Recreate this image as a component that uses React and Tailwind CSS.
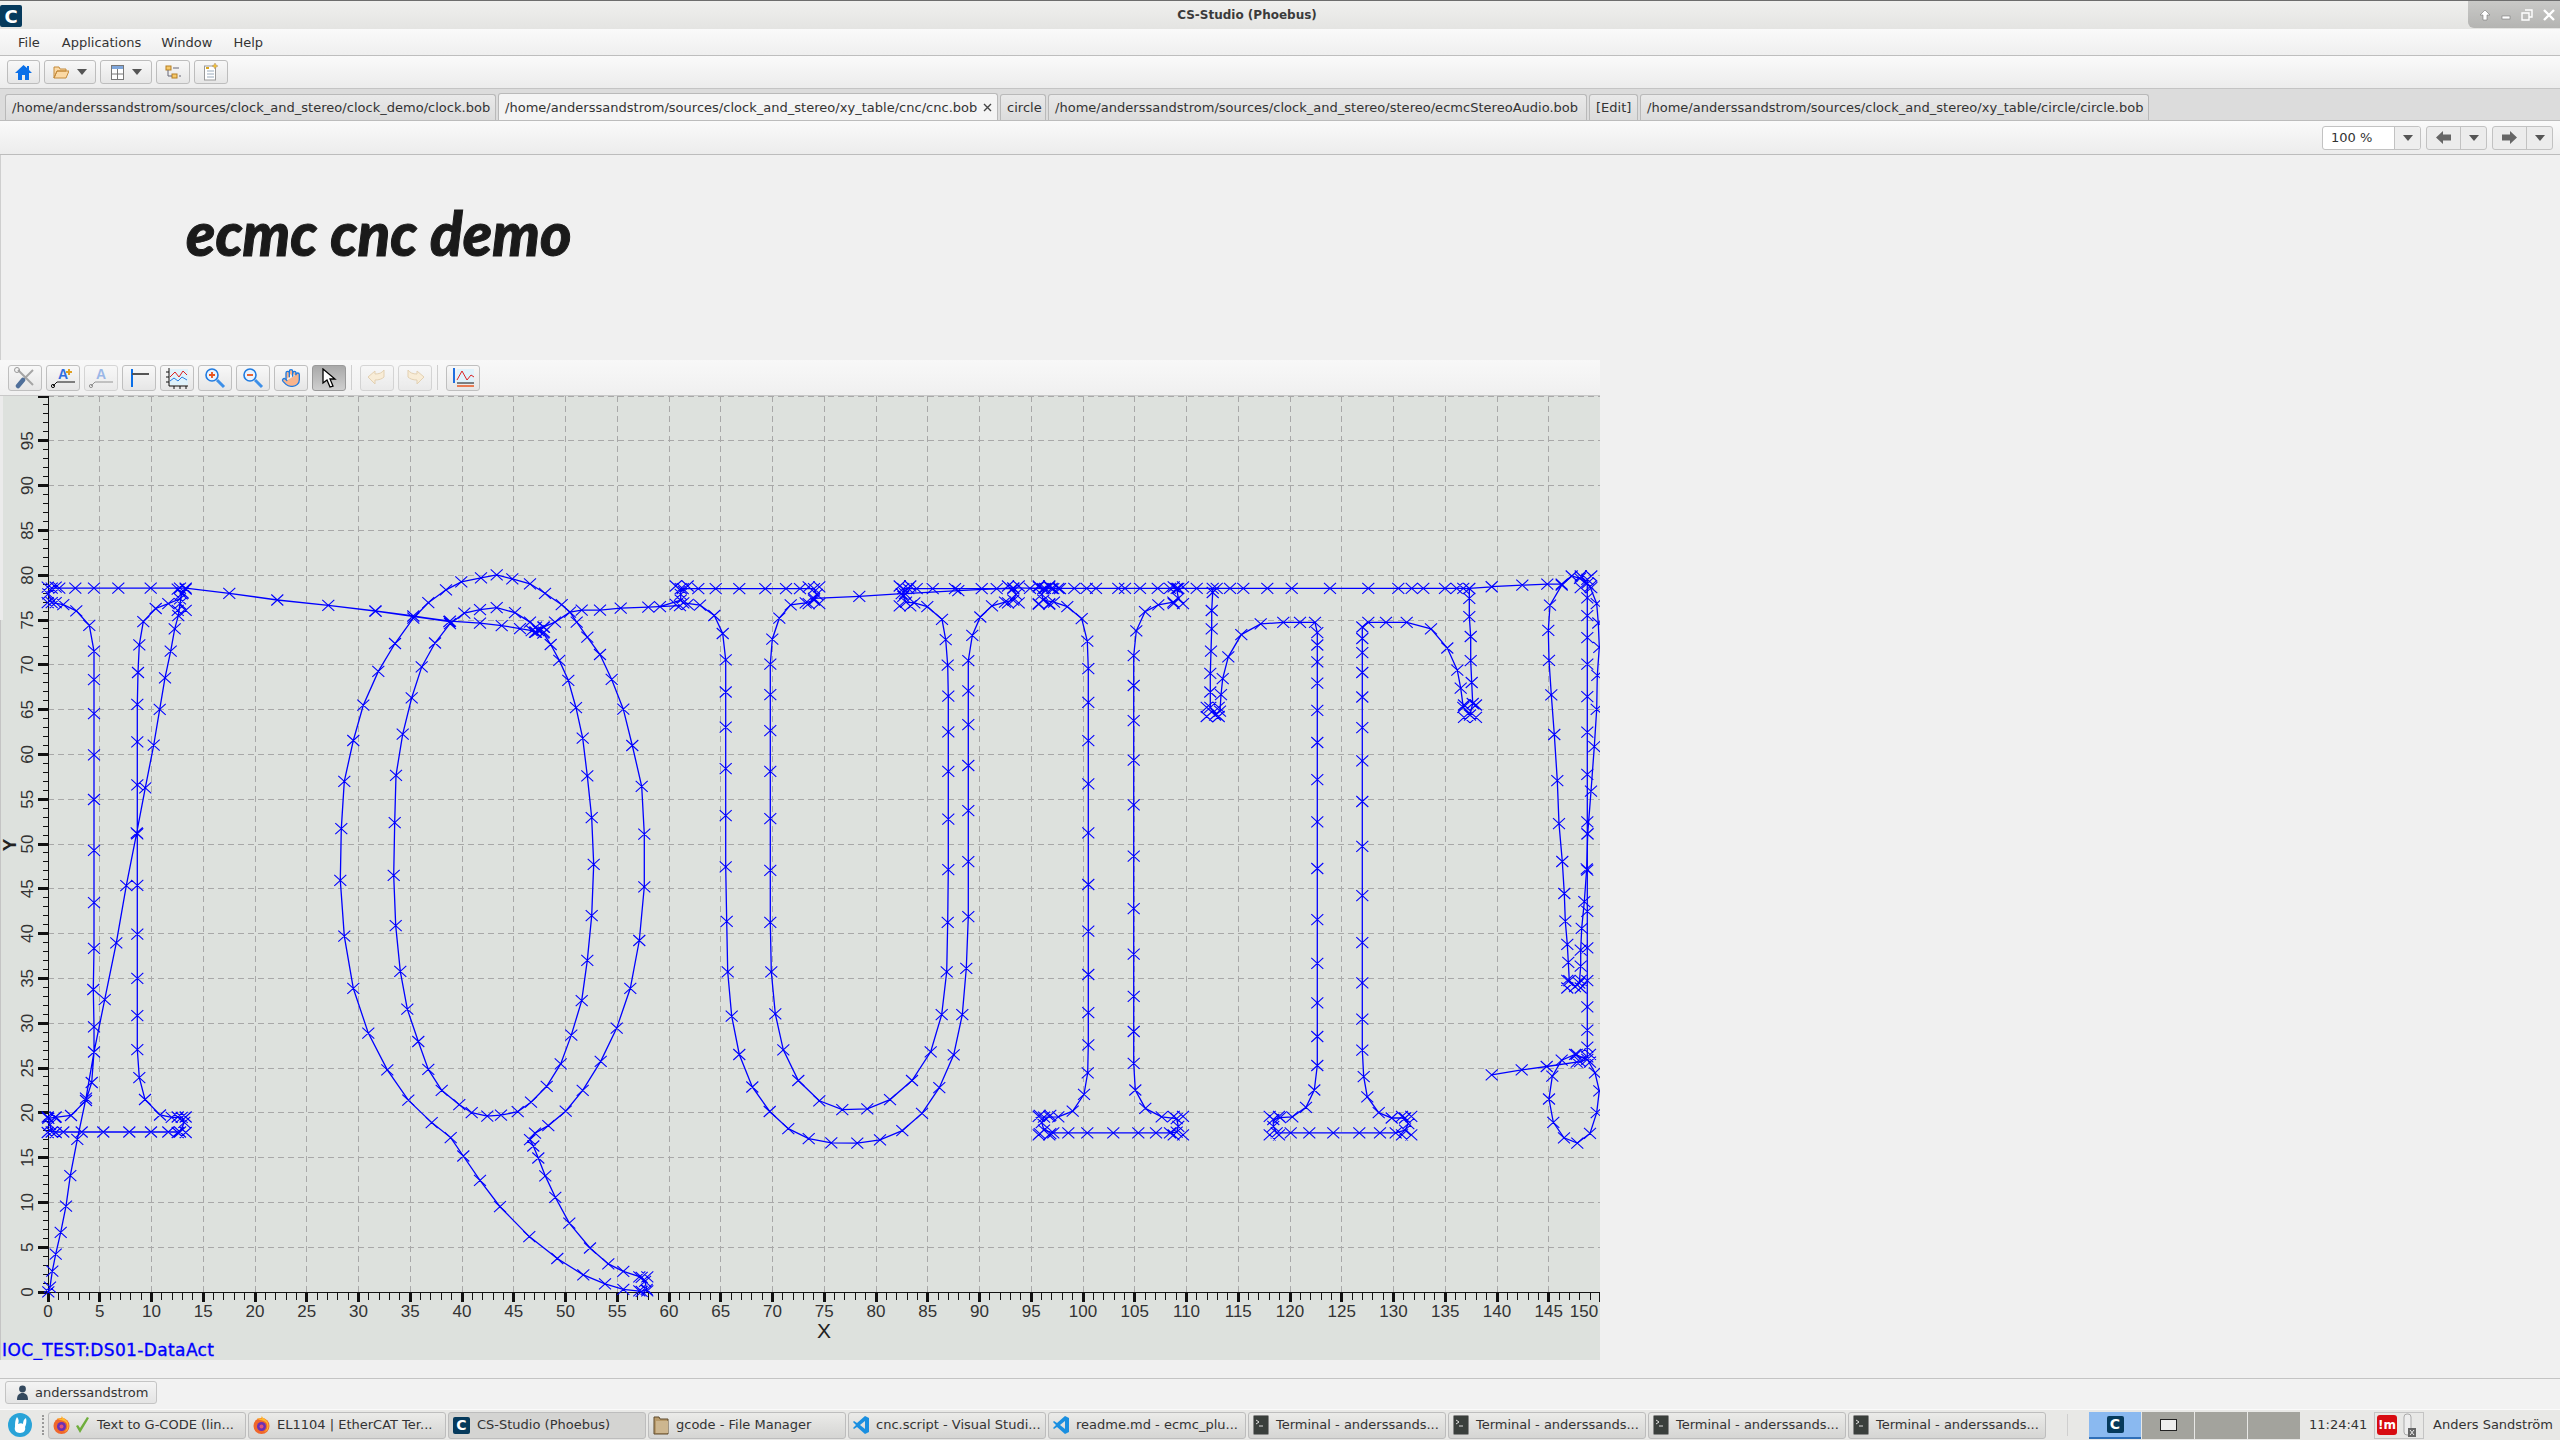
import React from 'react';
import { Hand } from 'lucide-react';

// chart geometry, in page pixels
const X0 = 48;
const Y0 = 1292;
const UX = 10.35;
const UY = 8.96;
const px = (v) => X0 + v * UX;
const py = (v) => Y0 - v * UY;

// traces were read off crops of the plot, so each crop gets its own scale
const z3 = (a) => a.map(([x, y]) => [x / 3, 340 + y / 3]);
const z7 = (a) => a.map(([x, y]) => [x / 3, 560 + y / 2.063]);
const z8 = (a) => a.map(([x, y]) => [300 + x / 3, 550 + y / 2.01]);
const z9 = (a) => a.map(([x, y]) => [1480 + x / 3, 560 + y / 2.063]);
const z10 = (a) => a.map(([x, y]) => [660 + x / 3, 560 + y / 2.613]);
const z11 = (a) => a.map(([x, y]) => [1030 + x / 3, 560 + y / 2.613]);

const traces = [
  // first I
  z7([[145,1510],[150,1500],[157,1467],[167,1432],[182,1387],[198,1333],[211,1270],[232,1195],[258,1110],[282,1015],[314,907],[349,790],[379,672],[410,563],[436,470],[461,382],[479,308],[495,243],[512,188],[524,142],[535,115],[540,90],[545,70],[557,58],[540,58],[452,58],[355,58],[282,58],[226,58],[178,58],[155,58],[145,70],[155,88],[190,92],[229,105],[268,135],[282,188],[282,247],[282,317],[282,402],[282,494],[282,599],[282,707],[282,801],[280,886],[282,963],[282,1015],[275,1078],[258,1115],[213,1146],[165,1150],[145,1152],[150,1165],[155,1180],[190,1180],[245,1180],[310,1180],[388,1180],[453,1180],[505,1180],[540,1180],[553,1160],[545,1150],[515,1150],[480,1145],[435,1113],[418,1068],[412,1010],[412,940],[412,863],[412,772],[412,671],[412,565],[412,464],[412,375],[412,298],[414,232],[418,175],[430,127],[467,100],[505,90],[540,80],[548,68],[557,58]]),
  // travel over to the Q
  [...z7([[557,58]]), ...z3([[688,760],[832,780],[985,796],[1126,813],[1240,828],[1348,845]]), ...z8([[227,123],[340,133],[450,143],[540,147],[605,152],[660,158],[695,162],[705,165],[715,162],[730,155],[765,145],[810,125],[845,121],[900,121],[962,117],[1045,115],[1140,112]])],
  // Q inner
  z8([[715,162],[690,145],[645,126],[590,116],[540,120],[493,127],[450,148],[405,187],[365,235],[335,297],[308,370],[288,453],[284,548],[281,654],[287,755],[301,847],[322,923],[355,988],[385,1044],[425,1086],[478,1115],[515,1131],[562,1138],[603,1136],[653,1129],[693,1110],[740,1078],[782,1033],[814,975],[845,906],[862,825],[875,735],[881,632],[875,538],[862,454],[848,378],[828,317],[805,262],[778,222],[752,190],[730,167],[715,162]]),
  // Q outer and tail
  z8([[810,125],[785,110],[735,87],[690,68],[637,58],[590,50],[543,56],[484,64],[438,80],[385,106],[340,137],[285,188],[235,244],[190,312],[160,383],[133,465],[124,560],[121,664],[133,776],[160,881],[205,971],[262,1045],[325,1106],[395,1151],[452,1181],[490,1218],[540,1267],[600,1320],[688,1380],[772,1424],[850,1457],[915,1475],[970,1486],[1025,1490],[1040,1486],[1035,1470],[1025,1462],[970,1450],[925,1435],[870,1403],[808,1353],[766,1301],[736,1258],[715,1222],[700,1198],[690,1185],[705,1172],[745,1157],[797,1128],[848,1086],[902,1028],[950,961],[991,881],[1018,785],[1033,677],[1033,571],[1025,475],[997,393],[970,320],[935,260],[900,210],[862,175],[830,145],[810,125]]),
  // U
  z10([[0,122],[62,105],[62,90],[62,75],[68,75],[115,75],[167,75],[238,75],[316,75],[378,75],[420,75],[462,75],[470,90],[462,105],[437,112],[392,117],[358,152],[337,207],[331,272],[331,352],[331,446],[331,552],[331,676],[331,811],[331,947],[334,1076],[346,1186],[370,1280],[415,1360],[478,1413],[547,1436],[622,1434],[690,1410],[756,1360],[812,1285],[845,1188],[860,1076],[863,947],[865,809],[865,677],[865,552],[865,449],[865,356],[863,275],[857,208],[846,155],[802,122],[763,112],[738,110],[730,95],[730,75]]),
  z10([[62,105],[70,112],[120,118],[163,145],[188,192],[197,261],[197,345],[197,437],[197,545],[197,668],[197,802],[200,944],[203,1076],[215,1192],[238,1292],[277,1377],[329,1441],[385,1486],[446,1512],[514,1523],[592,1524],[660,1515],[727,1491],[786,1446],[838,1379],[881,1293],[907,1188],[919,1067],[925,932],[925,788],[925,655],[925,537],[925,430],[925,342],[925,263],[937,197],[961,149],[996,120],[1035,110],[1060,105],[1068,90],[1060,75],[1010,75],[965,75],[885,75],[818,75],[770,75],[745,75],[730,75]]),
  z10([[462,100],[598,95],[725,88]]),
  z10([[735,88],[895,80],[1060,73],[1150,75],[1180,75],[1200,75]]),
  // second I
  z11([[0,74],[45,74],[65,74],[85,74],[133,74],[170,74],[198,74],[265,74],[285,74],[330,74],[383,74],[420,74],[440,74],[445,100],[430,110],[385,117],[345,135],[319,185],[311,250],[311,328],[311,420],[311,523],[311,640],[311,774],[311,911],[311,1030],[311,1140],[311,1232],[311,1315],[316,1385],[346,1433],[395,1455],[440,1460],[445,1480],[440,1495],[420,1497],[378,1497],[325,1497],[250,1497],[172,1497],[115,1497],[70,1497],[42,1490],[35,1470],[42,1456],[85,1455],[128,1440],[162,1396],[173,1340],[175,1267],[175,1183],[175,1083],[175,970],[175,848],[175,713],[175,585],[175,472],[175,372],[175,284],[172,212],[155,153],[112,122],[72,110],[40,105],[35,90],[45,74]]),
  // T
  z11([[445,74],[500,74],[548,74],[548,85],[545,132],[545,180],[543,238],[541,296],[541,345],[541,385],[555,405],[570,395],[573,352],[578,310],[595,253],[634,195],[692,167],[760,163],[810,163],[855,163],[862,190],[862,222],[862,266],[862,322],[862,393],[862,477],[862,574],[862,684],[862,806],[862,940],[862,1054],[862,1157],[862,1245],[862,1321],[853,1385],[828,1430],[787,1455],[750,1457],[730,1462],[730,1480],[740,1497],[782,1497],[838,1497],[910,1497],[988,1497],[1050,1497],[1097,1497],[1125,1490],[1135,1473],[1125,1458],[1085,1458],[1046,1444],[1012,1403],[1001,1350],[997,1281],[997,1200],[997,1105],[997,1000],[997,877],[997,748],[997,631],[997,525],[997,438],[997,358],[997,294],[997,242],[997,205],[997,175],[1015,163],[1068,163],[1130,163],[1203,180],[1252,230],[1282,288],[1292,335],[1300,385],[1320,405],[1328,375],[1325,320],[1322,263],[1322,200],[1318,148],[1318,100],[1318,75],[1300,74],[1280,74],[1245,74],[1180,74],[1145,74],[1105,74],[1015,74],[900,74],[785,74],[712,74],[640,74],[600,74],[560,74],[548,74]]),
  [...z11([[1318,74],[1385,70]]), ...z9([[35,55],[127,52],[202,50],[245,50],[275,33]])],
  // exclamation mark
  z9([[245,52],[210,93],[205,145],[207,207],[214,278],[223,360],[232,455],[237,544],[247,622],[253,688],[256,745],[262,793],[265,830],[268,868],[285,880],[298,873],[302,838],[302,805],[305,760],[313,705],[320,637],[323,565],[333,477],[343,385],[350,308],[352,238],[358,180],[355,130],[350,90],[330,55],[300,38],[275,33],[245,52]]),
  z9([[322,40],[322,48],[322,78],[322,115],[322,160],[322,215],[322,282],[322,355],[322,442],[322,540],[322,565],[322,640],[322,725],[322,800],[322,868],[322,922],[322,970],[322,1005],[322,1025]]),
  z9([[322,1030],[345,1058],[358,1095],[350,1140],[330,1183],[292,1203],[252,1192],[220,1160],[207,1112],[217,1065],[245,1032],[285,1020],[322,1030],[300,1035],[200,1045],[125,1052],[35,1062]]),
];

// the serif corners are where the machine slows down: markers pile up there
const pile = ([x, y], w, h) => [[x - w, y - h], [x + w, y - h], [x - w, y + h], [x + w, y + h]];
const piles = [
  ...z7([...pile([155, 72], 12, 16), ...pile([545, 82], 12, 22), ...pile([155, 1165], 12, 16), ...pile([545, 1165], 12, 16)]),
  ...z8([...pile([720, 160], 12, 5), ...pile([1030, 1475], 12, 14)]),
  ...z10([...pile([65, 92], 18, 24), ...pile([462, 92], 16, 22), ...pile([735, 94], 16, 26), ...pile([1060, 90], 16, 22), ...pile([1152, 92], 16, 24), ...pile([1155, 1475], 16, 24)]),
  ...z11([...pile([42, 92], 16, 22), ...pile([445, 92], 14, 22), ...pile([42, 1478], 16, 24), ...pile([445, 1478], 14, 24), ...pile([733, 1478], 14, 24), ...pile([1130, 1478], 14, 24), ...pile([548, 397], 18, 12), ...pile([1320, 395], 18, 16)]),
  ...z9([...pile([318, 45], 16, 12), ...pile([282, 875], 20, 8), ...pile([310, 1028], 20, 8)]),
];

const lineD = (pts) => pts.map(([x, y], i) => `${i ? 'L' : 'M'}${x.toFixed(1)} ${y.toFixed(1)}`).join('');
const markD = [...traces.flat(), ...piles]
  .map(([x, y]) => `M${(x - 6).toFixed(1)} ${(y - 5.5).toFixed(1)}l12 11m0 -11l-12 11`)
  .join('');

const range = (n) => Array.from({ length: n }, (_, i) => i);

function Plot() {
  return (
    <svg viewBox="0 396 1600 964" width="1600" height="964" className="block shrink-0">
      <rect x="0" y="396" width="1600" height="964" fill="#dde1dd" />
      <rect x="0" y="396" width="3" height="224" fill="#ebebeb" />
      <rect x="0" y="620" width="1" height="740" fill="#c4c4c4" />
      <g stroke="#a8a8a8" strokeWidth="1" strokeDasharray="6 4" shapeRendering="crispEdges">
        {range(30).map((i) => (
          <line key={i} x1={px((i + 1) * 5)} x2={px((i + 1) * 5)} y1="396" y2={Y0} />
        ))}
        {range(20).map((i) => (
          <line key={i} x1={X0} x2="1600" y1={py((i + 1) * 5)} y2={py((i + 1) * 5)} />
        ))}
      </g>
      {/* axes */}
      <g stroke="#111" shapeRendering="crispEdges">
        <line x1={X0} x2={X0} y1="396" y2={Y0} />
        <line x1={X0} x2="1600" y1={Y0} y2={Y0} />
        {range(101).map((i) =>
          i % 5 === 0 ? (
            <line key={i} x1="38" x2={X0} y1={py(i)} y2={py(i)} strokeWidth="3" />
          ) : (
            <line key={i} x1="43" x2={X0} y1={py(i)} y2={py(i)} />
          ),
        )}
        {range(151).map((i) =>
          i % 5 === 0 ? (
            <line key={i} x1={px(i)} x2={px(i)} y1={Y0} y2="1302" strokeWidth="3" />
          ) : (
            <line key={i} x1={px(i)} x2={px(i)} y1={Y0} y2="1300" />
          ),
        )}
      </g>
      <g fill="#333" fontSize="17" fontFamily="'Liberation Sans', sans-serif" textAnchor="middle">
        {range(31).map((i) => (
          <text key={i} x={i === 30 ? 1584 : px(i * 5)} y="1317">{i * 5}</text>
        ))}
        {range(20).map((i) => (
          <text key={i} x="0" y="0" transform={`translate(33 ${py(i * 5)}) rotate(-90)`}>{i * 5}</text>
        ))}
      </g>
      <text x="824" y="1338" fontSize="21" textAnchor="middle" fill="#222" fontFamily="'Liberation Sans', sans-serif">X</text>
      <text x="0" y="0" transform="translate(16 845) rotate(-90)" fontSize="19" fontWeight="700" textAnchor="middle" fill="#222" fontFamily="'Liberation Sans', sans-serif">Y</text>
      <text x="2" y="1356" fontSize="17" fill="#0000ff" stroke="#0000ff" strokeWidth=".35" fontFamily="'DejaVu Sans', sans-serif" textLength="212">IOC_TEST:DS01-DataAct</text>
      {/* traces */}
      <g fill="none" stroke="#0000ff" strokeWidth="1.3">
        {traces.map((t, i) => (
          <path key={i} d={lineD(t)} />
        ))}
      </g>
      <path d={markD} fill="none" stroke="#0000ff" strokeWidth="1.1" />
    </svg>
  );
}

function Caret({ className = '' }) {
  return (
    <svg width="10" height="6" viewBox="0 0 10 6" className={className}>
      <path d="M0 0h10L5 6z" fill="#555" />
    </svg>
  );
}

function LogoC({ size = 22, text = 'text-[18px]' }) {
  return (
    <span
      className={`flex items-center justify-center rounded-[2px] bg-[#063a5c] font-bold text-white ${text}`}
      style={{ width: size, height: size }}
    >
      C
    </span>
  );
}

function ToolBtn({ w, children }) {
  return (
    <div className={`flex h-[24px] items-center justify-center gap-2 rounded-[3px] border border-[#bdbdbd] bg-linear-to-b from-[#f8f8f8] to-[#e6e6e6] ${w}`}>
      {children}
    </div>
  );
}

function PlotBtn({ active, faded, children }) {
  return (
    <div
      className={`flex h-[26px] w-[34px] items-center justify-center rounded-[3px] border ${
        active ? 'border-[#9a9a9a] bg-linear-to-b from-[#a9a9a9] to-[#cfcfcf]' : 'border-[#bfbfbf] bg-linear-to-b from-[#f8f8f8] to-[#e6e6e6]'
      } ${faded ? 'opacity-60' : ''}`}
    >
      {children}
    </div>
  );
}

const Tab = ({ w, active, children }) => (
  <div
    className={`flex h-[26px] items-center rounded-t-[3px] border-x border-t border-[#b9b9b9] pl-[6px] pt-[1px] text-[13px] tracking-[0.02px] text-[#333] ${w} ${
      active ? 'h-[27px] self-end bg-[#f4f4f4]' : 'bg-linear-to-b from-[#e9e9e9] to-[#dcdcdc]'
    }`}
  >
    {children}
  </div>
);

function Firefox() {
  return (
    <svg width="17" height="20" viewBox="0 0 17 20">
      <circle cx="8.5" cy="11" r="8" fill="#f0672c" />
      <path d="M4 3c1 3 8 1 10 6 1 3 0 6-3 8 6-1 6-10 1-13-2-1-3-2-3-3-1 1-1 2 0 3C7 3 6 4 4 3z" fill="#ffb62e" />
      <circle cx="8.5" cy="11.5" r="4.5" fill="#6b2fb5" />
      <circle cx="8.5" cy="11.5" r="2" fill="#e0527a" />
    </svg>
  );
}

function VsCode() {
  return (
    <svg width="16" height="20" viewBox="0 0 16 20">
      <path d="M12 1l4 2v14l-4 2L4 12l-3 2-1-1 3-3-3-3 1-1 3 2zM12 6l-5 4 5 4z" fill="#1a8fe0" />
    </svg>
  );
}

function TerminalIcon() {
  return (
    <svg width="16" height="20" viewBox="0 0 16 20">
      <rect x="0.5" y="0.5" width="15" height="19" rx="1" fill="#3a3f3c" stroke="#888" />
      <path d="M3 5l3 2-3 2M6 11h4" stroke="#ddd" fill="none" />
    </svg>
  );
}

function FolderIcon() {
  return (
    <svg width="16" height="20" viewBox="0 0 16 20">
      <path d="M1 2h5l1 2h8v15H1z" fill="#b89a6a" stroke="#5f4b2c" />
      <rect x="3" y="6" width="12" height="12" fill="#cdb68f" />
    </svg>
  );
}

const TaskBtn = ({ active, children }) => (
  <div
    className={`flex h-[27px] w-[198px] shrink-0 items-center gap-[7px] rounded-[3px] border border-[#bdbdbd] pl-[4px] text-[13px] text-[#333] ${
      active ? 'bg-[#d4d4d2]' : 'bg-linear-to-b from-[#ebebe9] to-[#d5d5d3]'
    }`}
  >
    {children}
  </div>
);

const menus = [
  ['File', 'ml-[18px]'],
  ['Applications', 'ml-[22px]'],
  ['Window', 'ml-[20px]'],
  ['Help', 'ml-[21px]'],
];

export default function App() {
  return (
    <div className="flex h-[1440px] w-[2560px] flex-col overflow-hidden bg-[#f1f1f1] font-['DejaVu_Sans',sans-serif] text-[13px] text-[#333]">
      {/* window title */}
      <div className="relative flex h-[29px] shrink-0 items-center justify-center border-t border-[#6d6d6d] bg-linear-to-b from-[#f0f0ee] to-[#e4e4e2] pr-[66px]">
        <div className="absolute left-0 top-[4px]">
          <LogoC />
        </div>
        <span className="text-[12px] font-bold text-[#3b3b3b]">CS-Studio (Phoebus)</span>
        <div className="absolute right-0 top-0 flex h-[27px] w-[92px] items-center justify-around rounded-bl-[6px] bg-linear-to-b from-[#c9c9c7] to-[#b4b4b2] pl-[6px] text-white">
          <svg width="12" height="12" viewBox="0 0 12 12"><path d="M6 1l5 5H8v5H4V6H1z" fill="#fff" stroke="#777" strokeWidth=".6" /></svg>
          <svg width="10" height="12" viewBox="0 0 10 12"><rect x="1" y="7" width="8" height="3" fill="#fff" stroke="#777" strokeWidth=".6" /></svg>
          <svg width="12" height="12" viewBox="0 0 12 12"><path d="M4 1h7v7H8M1 4h7v7H1z" fill="none" stroke="#fff" strokeWidth="1.4" /></svg>
          <svg width="12" height="12" viewBox="0 0 12 12"><path d="M1 1l10 10M11 1L1 11" stroke="#fff" strokeWidth="2.4" /></svg>
        </div>
      </div>

      {/* menu */}
      <div className="flex h-[27px] shrink-0 items-center border-b border-[#bebebe] bg-linear-to-b from-[#fafafa] to-[#efefef] pt-[2px]">
        {menus.map(([m, c]) => (
          <span key={m} className={c}>{m}</span>
        ))}
      </div>

      {/* main toolbar */}
      <div className="flex h-[33px] shrink-0 items-center gap-[4px] border-b border-[#c4c4c4] bg-linear-to-b from-[#fafafa] to-[#ececec] pl-[7px]">
        <ToolBtn w="w-[33px]">
          <svg width="17" height="17" viewBox="0 0 17 17"><path d="M8.5 1L0 9h3v7h4v-5h3v5h4V9h3l-3-3V2h-2v2z" fill="#0a6fe8" /></svg>
        </ToolBtn>
        <ToolBtn w="w-[52px]">
          <svg width="16" height="14" viewBox="0 0 16 14"><path d="M1 2h5l1 2h6v2H4L1 13zM4 6h12l-3 7H1z" fill="#fbd9a5" stroke="#c48a3a" /></svg>
          <Caret />
        </ToolBtn>
        <ToolBtn w="w-[52px]">
          <svg width="13" height="15" viewBox="0 0 13 15"><rect x=".5" y=".5" width="12" height="14" fill="#fff" stroke="#777" /><rect x="1" y="1" width="11" height="3" fill="#7ea6dc" /><path d="M6.5 4v10M1 9h11" stroke="#777" /></svg>
          <Caret />
        </ToolBtn>
        <ToolBtn w="w-[34px]">
          <svg width="17" height="15" viewBox="0 0 17 15"><rect x="1" y="1" width="5" height="4" fill="#f6c96b" stroke="#b57f22" /><rect x="7" y="9" width="5" height="4" fill="#f6c96b" stroke="#b57f22" /><path d="M3 5v6h4M8 3h6M14 11h2" stroke="#667" fill="none" /></svg>
        </ToolBtn>
        <ToolBtn w="w-[34px]">
          <svg width="15" height="18" viewBox="0 0 15 18"><rect x=".5" y="3" width="11" height="14" fill="#fff" stroke="#999" /><path d="M3 8h7M3 11h7M3 14h7" stroke="#9ab" /><path d="M11 0l1 2 2 1-2 1-1 2-1-2-2-1 2-1z" fill="#f1c232" stroke="#a87" strokeWidth=".5" /><rect x="2" y="4" width="3" height="2" fill="#d9a520" /></svg>
        </ToolBtn>
      </div>

      {/* tabs */}
      <div className="flex h-[32px] shrink-0 items-end gap-[2px] border-b border-[#bcbcbc] bg-[#dcdcdc] pl-[5px]">
        <Tab w="w-[491px]">/home/anderssandstrom/sources/clock_and_stereo/clock_demo/clock.bob</Tab>
        <Tab w="w-[500px]" active>
          <span className="flex-1">/home/anderssandstrom/sources/clock_and_stereo/xy_table/cnc/cnc.bob</span>
          <svg width="9" height="9" viewBox="0 0 9 9" className="mr-[5px]"><path d="M1 1l7 7M8 1L1 8" stroke="#444" strokeWidth="1.4" /></svg>
        </Tab>
        <Tab w="w-[46px]">circle</Tab>
        <Tab w="w-[539px]">/home/anderssandstrom/sources/clock_and_stereo/stereo/ecmcStereoAudio.bob</Tab>
        <Tab w="w-[49px]">[Edit]</Tab>
        <Tab w="w-[509px]">/home/anderssandstrom/sources/clock_and_stereo/xy_table/circle/circle.bob</Tab>
      </div>

      {/* display toolbar */}
      <div className="flex h-[34px] shrink-0 items-center justify-end gap-[5px] border-b border-[#bcbcbc] bg-linear-to-b from-[#fafafa] to-[#ececec] pr-[7px]">
        <div className="flex h-[24px] w-[99px] items-center rounded-[3px] border border-[#c2c2c2] bg-white pl-[8px]">
          <span className="flex-1">100 %</span>
          <div className="flex h-full w-[26px] items-center justify-center rounded-r-[3px] border-l border-[#c2c2c2] bg-[#eeeeee]"><Caret /></div>
        </div>
        <div className="flex h-[24px] w-[61px] items-center rounded-[3px] border border-[#c2c2c2] bg-[#ececec]">
          <div className="flex h-full w-[34px] items-center justify-center border-r border-[#c2c2c2]">
            <svg width="15" height="13" viewBox="0 0 15 13"><path d="M0 6.5L7 0v3.5h8v6H7V13z" fill="#666" /></svg>
          </div>
          <div className="flex flex-1 items-center justify-center"><Caret /></div>
        </div>
        <div className="flex h-[24px] w-[61px] items-center rounded-[3px] border border-[#c2c2c2] bg-[#ececec]">
          <div className="flex h-full w-[34px] items-center justify-center border-r border-[#c2c2c2]">
            <svg width="15" height="13" viewBox="0 0 15 13"><path d="M15 6.5L8 0v3.5H0v6h8V13z" fill="#666" /></svg>
          </div>
          <div className="flex flex-1 items-center justify-center"><Caret /></div>
        </div>
      </div>

      {/* display */}
      <div className="flex min-h-0 flex-1 flex-col border-b border-[#c4c4c4] bg-[#f0f0f0]">
        <div className="h-[205px] shrink-0 border-l border-[#cfcfcf] pl-[185px] pt-[43px] font-['Lato',sans-serif] text-[60px] font-black italic leading-[70px] text-[#1a1a1a] [-webkit-text-stroke:1px_#1a1a1a]">
          ecmc cnc demo
        </div>
        <div className="flex h-[36px] w-[1600px] shrink-0 items-center gap-[4px] border-b border-[#c8c8c8] bg-linear-to-b from-[#f8f8f8] to-[#f0f0f0] pl-[8px]">
          <PlotBtn>
            <svg width="24" height="22" viewBox="0 0 24 22"><path d="M5 3l15 15" stroke="#a5a5a5" strokeWidth="2" fill="none" /><path d="M20 3L11 12" stroke="#a5a5a5" strokeWidth="2" fill="none" /><path d="M10 13l-5 6" stroke="#4f6f9a" strokeWidth="4.5" strokeLinecap="round" /><circle cx="4" cy="3" r="2.5" fill="none" stroke="#999" /></svg>
          </PlotBtn>
          <PlotBtn>
            <svg width="26" height="22" viewBox="0 0 26 22"><text x="8" y="12" fontSize="14" fontWeight="700" fill="#2f6fe0" fontFamily="'Liberation Sans', sans-serif">A</text><path d="M19 2v6M16 5h6" stroke="#e0a020" strokeWidth="2" /><path d="M7 15h18M7 15l-4 4" stroke="#111" fill="none" /><circle cx="3" cy="19" r="1.6" fill="none" stroke="#111" /></svg>
          </PlotBtn>
          <PlotBtn faded>
            <svg width="26" height="22" viewBox="0 0 26 22"><text x="8" y="12" fontSize="14" fontWeight="700" fill="#5f8fe0" fontFamily="'Liberation Sans', sans-serif">A</text><path d="M7 15h18M7 15l-4 4" stroke="#555" fill="none" /><circle cx="3" cy="19" r="1.6" fill="none" stroke="#555" /></svg>
          </PlotBtn>
          <PlotBtn>
            <svg width="24" height="20" viewBox="0 0 24 20"><path d="M5 1v18" stroke="#0a6fe8" strokeWidth="2" /><path d="M5 6h17" stroke="#555" strokeWidth="2" /></svg>
          </PlotBtn>
          <PlotBtn>
            <svg width="24" height="22" viewBox="0 0 24 22"><rect x="5" y="2" width="18" height="16" fill="#dff2fb" /><path d="M5 10l5-5 4 5 4-6 4 4" stroke="#d22" fill="none" /><path d="M5 14l4-3 4 3 4-4 5 3" stroke="#2a7de1" fill="none" /><path d="M4 1v18h19M1 5h3M1 10h3M1 15h3M9 19v3M15 19v3M21 19v3" stroke="#111" fill="none" /></svg>
          </PlotBtn>
          <PlotBtn>
            <svg width="22" height="22" viewBox="0 0 22 22"><circle cx="8" cy="8" r="6" fill="#eaf4ff" stroke="#1f7ae0" strokeWidth="1.6" /><path d="M5 8h6M8 5v6" stroke="#e8541e" strokeWidth="1.8" /><path d="M13 13l7 7" stroke="#3d8fe8" strokeWidth="3" /></svg>
          </PlotBtn>
          <PlotBtn>
            <svg width="22" height="22" viewBox="0 0 22 22"><circle cx="8" cy="8" r="6" fill="#eaf4ff" stroke="#1f7ae0" strokeWidth="1.6" /><path d="M5 8h6" stroke="#e8541e" strokeWidth="1.8" /><path d="M13 13l7 7" stroke="#3d8fe8" strokeWidth="3" /></svg>
          </PlotBtn>
          <PlotBtn>
            <Hand size={20} fill="#f8b48c" stroke="#1f7ae0" strokeWidth={1.6} />
          </PlotBtn>
          <PlotBtn active>
            <svg width="16" height="20" viewBox="0 0 16 20"><path d="M2 1v14l4-3 3 7 3-1-3-7h5z" fill="#fff" stroke="#000" strokeWidth="1.3" /></svg>
          </PlotBtn>
          <div className="ml-[1px] mr-[4px] h-[25px] w-px bg-[#cfcfcf]" />
          <PlotBtn faded>
            <svg width="20" height="18" viewBox="0 0 20 18"><path d="M1 8l7 7V11c4 0 7-1 9-3V1c-2 3-5 4-9 4V2z" fill="#fbe8c4" stroke="#d8b987" /></svg>
          </PlotBtn>
          <PlotBtn faded>
            <svg width="20" height="18" viewBox="0 0 20 18"><path d="M19 8l-7 7V11C8 11 5 10 3 8V1c2 3 5 4 9 4V2z" fill="#fbe8c4" stroke="#d8b987" /></svg>
          </PlotBtn>
          <div className="ml-[1px] mr-[4px] h-[25px] w-px bg-[#cfcfcf]" />
          <PlotBtn>
            <svg width="24" height="22" viewBox="0 0 24 22"><rect x="6" y="2" width="17" height="14" fill="#dff2fb" /><path d="M6 13l5-9 5 9 4-5 3 2" stroke="#d22" fill="none" /><path d="M3 1v15" stroke="#1f6fe0" strokeWidth="2" /><path d="M6 16h17" stroke="#111" /><path d="M6 19h17" stroke="#e8541e" strokeWidth="1.5" /></svg>
          </PlotBtn>
        </div>
        <Plot />
      </div>

      {/* user bar */}
      <div className="flex h-[30px] shrink-0 items-start bg-[#f2f2f2] pl-[5px] pt-[2px]">
        <div className="flex h-[23px] w-[152px] items-center gap-[6px] rounded-[3px] border border-[#c4c4c4] bg-linear-to-b from-[#f4f4f4] to-[#e4e4e4] pl-[10px]">
          <svg width="13" height="15" viewBox="0 0 13 15"><circle cx="6.5" cy="4" r="3.4" fill="#34495e" /><path d="M1 15c0-5 2-7 5.5-7s5.5 2 5.5 7z" fill="#34495e" /></svg>
          anderssandstrom
        </div>
      </div>

      {/* desktop panel */}
      <div className="flex h-[31px] shrink-0 items-center border-t border-[#fafafa] bg-[#e8e8e6]">
        <div className="ml-[8px] flex h-[24px] w-[24px] items-center justify-center rounded-full bg-[#29a3d8]">
          <svg width="16" height="18" viewBox="0 0 16 18"><path d="M5 1c2 2 2 5 1 7 2-1 4-1 5 0 0-3 1-5 3-6 1 3 0 7-1 9 1 3-1 6-5 6s-6-3-5-6c0-4 0-7 2-10z" fill="#fff" /></svg>
        </div>
        <div className="ml-[10px] mr-[4px] h-[20px] w-[2px] border-l-2 border-dotted border-[#999]" />
        <div className="flex items-center gap-[2px]">
          <TaskBtn><Firefox /><svg width="15" height="18" viewBox="0 0 15 18" className="-ml-[2px]"><path d="M1 10l4 7 9-15-2-1-7 11-2-3z" fill="#6fae3c" /></svg>Text to G-CODE (lin...</TaskBtn>
          <TaskBtn><Firefox />EL1104 | EtherCAT Ter...</TaskBtn>
          <TaskBtn active><LogoC size={17} text="text-[14px]" />CS-Studio (Phoebus)</TaskBtn>
          <TaskBtn><FolderIcon />gcode - File Manager</TaskBtn>
          <TaskBtn><VsCode />cnc.script - Visual Studi...</TaskBtn>
          <TaskBtn><VsCode />readme.md - ecmc_plu...</TaskBtn>
          <TaskBtn><TerminalIcon />Terminal - anderssands...</TaskBtn>
          <TaskBtn><TerminalIcon />Terminal - anderssands...</TaskBtn>
          <TaskBtn><TerminalIcon />Terminal - anderssands...</TaskBtn>
          <TaskBtn><TerminalIcon />Terminal - anderssands...</TaskBtn>
        </div>
        <div className="ml-[21px] h-[22px] w-px bg-[#cfcfcf]" />
        <div className="ml-[21px] flex h-[27px] gap-px">
          <div className="flex w-[52px] items-center justify-center border-b-2 border-[#2f6fb8] bg-[#8ab9f0]"><LogoC size={17} text="text-[14px]" /></div>
          <div className="flex w-[52px] items-center justify-center bg-[#a3a39d]"><div className="h-[12px] w-[17px] border border-[#222] bg-[#eeeeee]" /></div>
          <div className="w-[52px] bg-[#a3a39d]" />
          <div className="w-[52px] bg-[#a3a39d]" />
        </div>
        <span className="ml-[9px] w-[65px]">11:24:41</span>
        <div className="flex h-[27px] w-[50px] items-center gap-[4px] border border-[#c4c4c4] pl-[2px]">
          <span className="flex h-[20px] w-[20px] items-center justify-center rounded-[3px] bg-[#d80c12] text-[12px] font-bold text-white">!m</span>
          <svg width="16" height="25" viewBox="0 0 16 25"><rect x="3" y="1" width="7" height="21" rx="3" fill="#eee" stroke="#aaa" /><rect x="7" y="15" width="8" height="9" fill="#666" /><path d="M9 17l4 5M13 17l-4 5" stroke="#eee" /></svg>
        </div>
        <span className="ml-[9px]">Anders Sandström</span>
      </div>
    </div>
  );
}
